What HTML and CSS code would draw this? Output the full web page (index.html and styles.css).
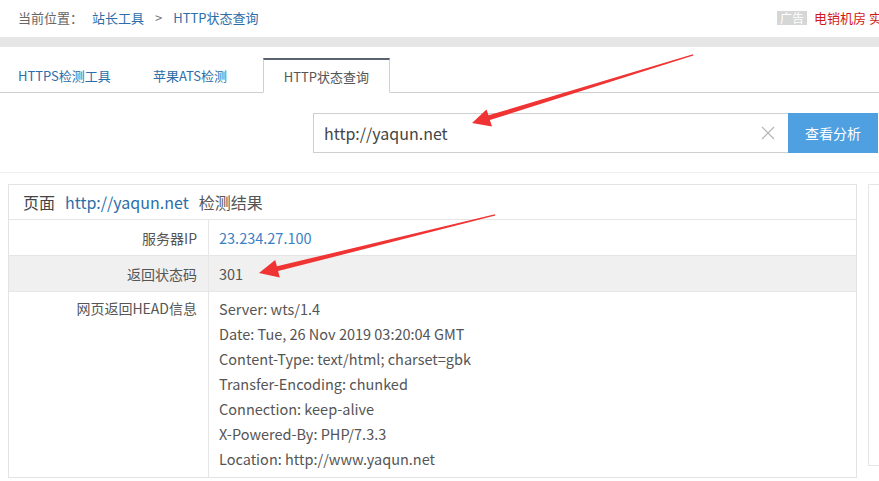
FILE: index.html
```html
<!DOCTYPE html>
<html lang="zh-CN">
<head>
<meta charset="utf-8">
<title>HTTP状态查询</title>
<link rel="stylesheet" href="styles.css">
</head>
<body>
<div class="page">
  <header class="crumbs">
    <div class="path">
      <span class="muted">当前位置：</span>
      <a class="link">站长工具</a>
      <span class="sep">&gt;</span>
      <a class="link">HTTP状态查询</a>
    </div>
    <div class="ad"><span class="ad-tag">广告</span><span class="ad-text">电销机房 实惠稳定</span></div>
  </header>
  <div class="band"></div>
  <nav class="tabs">
    <a class="tab first">HTTPS检测工具</a>
    <a class="tab">苹果ATS检测</a>
    <a class="tab active">HTTP状态查询</a>
  </nav>
  <section class="search">
    <div class="field">
      <span class="value">http://yaqun.net</span>
      <span class="clear">
        <svg width="14" height="14" viewBox="0 0 14 14"><path d="M1 1 L13 13 M13 1 L1 13" stroke="#b5b5b5" stroke-width="1.2" fill="none"/></svg>
      </span>
    </div>
    <button class="btn">查看分析</button>
  </section>
  <main class="main">
    <div class="panel">
      <div class="title"><span class="t-dark">页面</span><a class="t-link">http://yaqun.net</a><span class="t-mid">检测结果</span></div>
      <div class="row">
        <div class="label">服务器IP</div>
        <div class="val ip">23.234.27.100</div>
      </div>
      <div class="row alt">
        <div class="label">返回状态码</div>
        <div class="val">301</div>
      </div>
      <div class="row multi">
        <div class="label">网页返回HEAD信息</div>
        <div class="val lines">
          <div>Server: wts/1.4</div>
          <div>Date: Tue, 26 Nov 2019 03:20:04 GMT</div>
          <div>Content-Type: text/html; charset=gbk</div>
          <div>Transfer-Encoding: chunked</div>
          <div>Connection: keep-alive</div>
          <div>X-Powered-By: PHP/7.3.3</div>
          <div>Location: http://www.yaqun.net</div>
        </div>
      </div>
    </div>
    <aside class="side"></aside>
  </main>
  <svg class="arrows" width="879" height="481" viewBox="0 0 879 481">
    <polygon fill="#f03434" points="472,123 486.5,109.5 488.5,115.3 693,54.3 693.4,55.6 489.9,120.1 492,126.5"/>
    <polygon fill="#f03434" points="259,273 275.2,260 276.9,266.3 495,214.3 495.3,215.6 278.1,271.1 279.8,277.5"/>
  </svg>
</div>
</body>
</html>
```
FILE: styles.css
```css
* { box-sizing: border-box; }
html, body { margin: 0; padding: 0; background: #fff; }
body {
  font-family: "Noto Sans CJK SC", "Liberation Sans", sans-serif;
  font-size: 13px;
  color: #555;
  overflow: hidden;
}
a { text-decoration: none; cursor: pointer; }
.page { position: relative; width: 879px; height: 481px; overflow: hidden; }

.crumbs {
  height: 37px;
  display: flex;
  align-items: center;
  padding-left: 18px;
  padding-bottom: 2px;
}
.path { display: flex; align-items: center; white-space: nowrap; }
.muted { color: #666; margin-right: 9px; }
.link { color: #2c6ea8; }
.sep { color: #777; margin: 0 11px 0 11px; }
.ad {
  margin-left: auto;
  width: 102px;
  flex-shrink: 0;
  overflow: hidden;
  white-space: nowrap;
  display: flex;
  align-items: center;
}
.ad-tag {
  background: #d6d6d6;
  color: #fff;
  font-size: 12px;
  line-height: 14px;
  padding: 0 3px;
  margin-right: 7px;
}
.ad-text { color: #d11a1a; }

.band { height: 10px; background: #e6e6e6; }

.tabs {
  height: 46px;
  display: flex;
  align-items: flex-end;
  border-bottom: 1px solid #cfcfcf;
}
.tab {
  height: 35px;
  display: flex;
  align-items: center;
  padding: 0 21px;
  color: #2c6ea8;
  margin-bottom: -1px;
  white-space: nowrap;
}
.tab.first { padding-left: 18px; }
.tab.active {
  margin-left: 15px;
  padding: 0;
  width: 127px;
  justify-content: center;
  color: #555;
  background: #fff;
  border: 1px solid #cfcfcf;
  border-top: 2px solid #5a6270;
  border-bottom: 1px solid #fff;
}

.search {
  display: flex;
  justify-content: flex-end;
  padding: 20px 1px 19px 0;
  border-bottom: 1px solid #eeeeee;
}
.field {
  width: 475px;
  height: 40px;
  border: 1px solid #cfcfcf;
  border-right: none;
  display: flex;
  align-items: center;
  padding: 0 13px 0 10px;
}
.value { font-size: 16px; color: #444; flex: 1; }
.clear { display: flex; align-items: center; }
.btn {
  width: 90px;
  height: 40px;
  border: none;
  background: #4ea0e0;
  color: #fff;
  font-family: inherit;
  font-size: 14px;
  padding: 0;
}

.main {
  display: flex;
  gap: 11px;
  padding: 11px 0 0 8px;
}
.panel {
  width: 849px;
  flex-shrink: 0;
  border: 1px solid #e3e3e3;
}
.title {
  height: 35px;
  display: flex;
  align-items: center;
  padding-left: 14px;
  font-size: 16px;
  border-bottom: 1px solid #e6e6e6;
}
.t-dark { color: #444; }
.t-link { color: #2c6ea8; margin: 0 10px 0 10px; }
.t-mid { color: #555; }

.row {
  display: grid;
  grid-template-columns: 200px 1fr;
  height: 36px;
  border-bottom: 1px solid #e6e6e6;
  font-size: 14.5px;
}
.row.alt { background: #f0f0f0; }
.label {
  text-align: right;
  padding-right: 11px;
  border-right: 1px solid #e6e6e6;
  display: flex;
  align-items: center;
  justify-content: flex-end;
  color: #555;
  font-size: 14px;
}
.val {
  padding-left: 10px;
  display: flex;
  align-items: center;
  color: #555;
}
.val.ip { color: #3d7fc6; }
.row.multi { height: auto; border-bottom: none; }
.row.multi .label { align-items: flex-start; padding-top: 6px; }
.val.lines {
  display: block;
  padding-top: 4px;
  padding-bottom: 6px;
  line-height: 25px;
}

.side {
  width: 40px;
  height: 282px;
  flex-shrink: 0;
  border: 1px solid #e6e6e6;
}

.arrows { position: absolute; left: 0; top: 0; pointer-events: none; }
```
